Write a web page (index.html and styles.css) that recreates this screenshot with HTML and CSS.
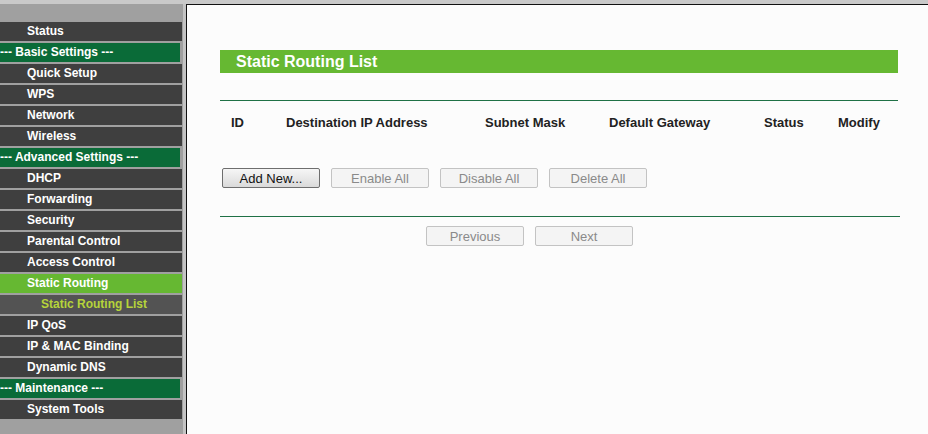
FILE: index.html
```html
<!DOCTYPE html>
<html lang="en">
<head>
    <meta charset="UTF-8">
    <title>Static Routing List</title>
    <link rel="stylesheet" href="styles.css">
</head>
<body>

    <div class="topband"></div>

    <div class="frame">

        <!-- Left menu -->
        <div class="sidebar">
            <a class="item" href="#">Status</a>
            <div class="group">--- Basic Settings ---</div>
            <a class="item" href="#">Quick Setup</a>
            <a class="item" href="#">WPS</a>
            <a class="item" href="#">Network</a>
            <a class="item" href="#">Wireless</a>
            <div class="group">--- Advanced Settings ---</div>
            <a class="item" href="#">DHCP</a>
            <a class="item" href="#">Forwarding</a>
            <a class="item" href="#">Security</a>
            <a class="item" href="#">Parental Control</a>
            <a class="item" href="#">Access Control</a>
            <a class="item active" href="#">Static Routing</a>
            <a class="item sub" href="#">Static Routing List</a>
            <a class="item" href="#">IP QoS</a>
            <a class="item" href="#">IP &amp; MAC Binding</a>
            <a class="item" href="#">Dynamic DNS</a>
            <div class="group">--- Maintenance ---</div>
            <a class="item" href="#">System Tools</a>
        </div>

        <!-- Main content -->
        <div class="content">
            <div class="panel">
                <div class="title">Static Routing List</div>

                <div class="rule"></div>

                <div class="list-head">
                    <span>ID</span>
                    <span>Destination IP Address</span>
                    <span>Subnet Mask</span>
                    <span>Default Gateway</span>
                    <span>Status</span>
                    <span>Modify</span>
                </div>

                <div class="actions">
                    <button class="btn">Add New...</button>
                    <button class="btn" disabled>Enable All</button>
                    <button class="btn" disabled>Disable All</button>
                    <button class="btn" disabled>Delete All</button>
                </div>

                <div class="rule wide"></div>

                <div class="pager">
                    <button class="btn" disabled>Previous</button>
                    <button class="btn" disabled>Next</button>
                </div>
            </div>
        </div>

    </div>

</body>
</html>
```

FILE: styles.css
```css
/* Page */
body {
    margin: 0;
    padding: 0;
    font-family: "Liberation Sans", Arial, sans-serif;
    background-color: #fcfcfc;
    overflow: hidden;
}

.topband {
    height: 4px;
    background-color: #c9c9c9;
}

.frame {
    display: flex;
    height: 430px;
}

/* Sidebar */
.sidebar {
    width: 183px;
    flex-shrink: 0;
    padding-top: 18px;
    background-color: #a0a0a0;
    border-right: 3px solid #c4c4c4;
    display: flex;
    flex-direction: column;
    gap: 2px;
}

.sidebar .item,
.sidebar .group {
    display: block;
    height: 19px;
    line-height: 19px;
    font-size: 12px;
    font-weight: bold;
    color: #fff;
    text-decoration: none;
    white-space: nowrap;
}

.sidebar .item {
    width: 155px;
    padding-left: 27px;
    background-color: #3f3f3f;
}

.sidebar .group {
    width: 180px;
    background-color: #0a6b38;
}

.sidebar .item.active {
    background-color: #66b832;
}

.sidebar .item.sub {
    width: 141px;
    padding-left: 41px;
    background-color: #535353;
    color: #b6d43a;
}

/* Main content */
.content {
    flex: 1;
    border-top: 1px solid #111;
    border-left: 1px solid #111;
    padding: 45px 0 0 33px;
}

.panel {
    width: 678px;
}

.title {
    height: 23px;
    line-height: 23px;
    padding-left: 16px;
    background-color: #66b832;
    color: #fff;
    font-size: 16px;
    font-weight: bold;
}

.rule {
    height: 1px;
    margin-top: 27px;
    background-color: #1f7146;
}

.rule.wide {
    width: 680px;
    margin-top: 28px;
}

.list-head {
    display: grid;
    grid-template-columns: 55px 199px 124px 155px 74px 1fr;
    height: 44px;
    line-height: 44px;
    font-size: 13px;
    font-weight: bold;
    color: #222;
}

.list-head span {
    padding-left: 11px;
}

/* Buttons */
.actions {
    display: flex;
    gap: 11px;
    margin-top: 23px;
    padding-left: 2px;
}

.btn {
    width: 98px;
    height: 20px;
    padding: 0;
    font-family: "Liberation Sans", Arial, sans-serif;
    font-size: 13px;
    color: #111;
    background: linear-gradient(#f6f6f6, #dadada);
    border: 1px solid #6e6e6e;
    border-radius: 2px;
}

.btn:disabled {
    color: #8a8a8a;
    background: #f4f4f4;
    border-color: #c3c3c3;
}

.pager {
    display: flex;
    gap: 11px;
    margin-top: 9px;
    padding-left: 206px;
}
```
